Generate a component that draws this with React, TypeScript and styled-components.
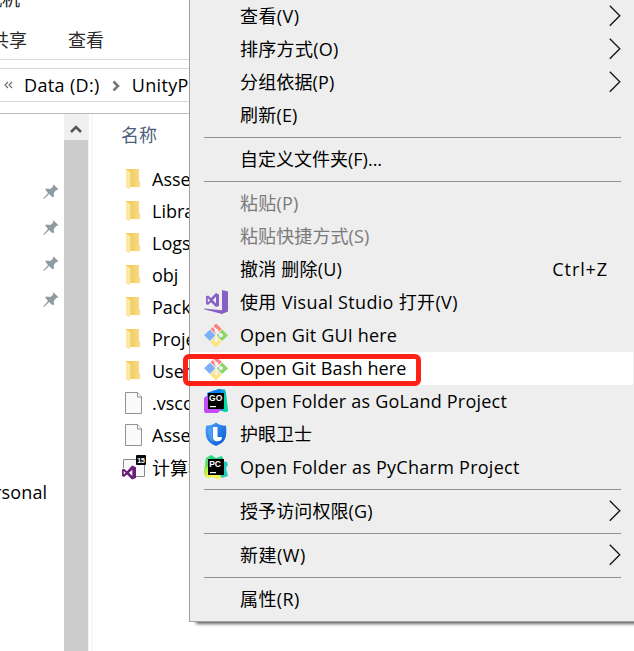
import React from "react";
import styled, { createGlobalStyle } from "styled-components";

const Global = createGlobalStyle`
  * { box-sizing: border-box; }
  body { margin: 0; overflow: hidden; background: #fff; }
`;

const Screen = styled.div`
  position: relative;
  width: 634px;
  height: 651px;
  overflow: hidden;
  background: #fff;
  color: #000;
  font-family: "Open Sans", "Noto Sans CJK SC", sans-serif;
  font-size: 18px;
`;
const Explorer = styled.div`
  display: flex;
  flex-direction: column;
  height: 100%;
  white-space: nowrap;
`;
const TitleBar = styled.div`
  display: flex;
  align-items: flex-end;
  height: 20px;
  padding-bottom: 9px;
  line-height: 24px;
  color: #222;
`;
const TitleText = styled.span`
  margin-left: -16px;
`;
const Tabs = styled.div`
  display: flex;
  align-items: center;
  gap: 41px;
  height: 40px;
  margin-left: -9px;
  padding-bottom: 2px;
  border-bottom: 1px solid #dadada;
  color: #2b2b2b;
`;
const AddressBar = styled.div`
  display: flex;
  align-items: center;
  height: 34px;
  margin-top: 8px;
  padding: 0 0 1px 4px;
  border: solid #d9d9d9;
  border-width: 1px 0;
`;
const Crumb = styled.span`
  letter-spacing: 0.35px;
`;
const Body = styled.div`
  display: flex;
  flex: 1;
  margin-top: 11px;
  border-top: 1px solid #b9b9b9;
`;
const NavPane = styled.div`
  display: flex;
  flex-direction: column;
  width: 64px;
  padding-top: 60px;
`;
const PinRow = styled.div`
  display: flex;
  justify-content: flex-end;
  align-items: center;
  height: 36px;
  padding-right: 5px;
`;
const NavLabel = styled.div`
  display: flex;
  align-items: center;
  height: 36px;
  margin: 156px 0 0 -6px;
  letter-spacing: 0.15px;
`;
const ScrollBar = styled.div`
  display: flex;
  flex-direction: column;
  width: 25px;
  border-right: 1px solid #f0f0f0;
`;
const ScrollUp = styled.div`
  display: flex;
  align-items: center;
  justify-content: center;
  height: 26px;
  padding-top: 3px;
  background: #f0f0f0;
`;
const Thumb = styled.div`
  flex: 1;
  background: #cdcdcd;
`;
const FilePane = styled.div`
  flex: 1;
  margin-left: 2px;
  border-left: 2px solid #f7f7f7;
`;
const ColumnHead = styled.div`
  display: flex;
  align-items: center;
  height: 49px;
  padding: 0 0 10px 28px;
  color: #4c607a;
`;
const FileRow = styled.div`
  display: flex;
  align-items: center;
  height: 32px;
  padding-left: 29px;
`;
const FileIcon = styled.div<{ $inset?: number }>`
  display: flex;
  width: 30px;
  padding-left: ${(p) => p.$inset ?? 0}px;
`;

const Menu = styled.div`
  position: absolute;
  left: 189px;
  top: 0;
  width: 460px;
  height: 622px;
  background: #eeeeee;
  border: solid #a0a0a0;
  border-width: 0 0 1px 1px;
  box-shadow: 6px 3px 3px -1px rgba(0, 0, 0, 0.6);
  white-space: pre;
`;
const MenuRow = styled.div<{ $active?: boolean; $disabled?: boolean }>`
  display: flex;
  align-items: center;
  width: 443px;
  height: 33px;
  padding-bottom: 1px;
  background: ${(p) => (p.$active ? "#fff" : "transparent")};
  color: ${(p) => (p.$disabled ? "#7a7a7a" : "#000")};
`;
const IconSlot = styled.div`
  display: flex;
  width: 50px;
  padding-left: 14px;
`;
const Label = styled.span<{ $track: number }>`
  flex: 1;
  line-height: 24px;
  padding-bottom: 1px;
  letter-spacing: ${(p) => p.$track}px;
`;
const Shortcut = styled.span`
  margin-right: 25px;
  line-height: 24px;
  padding-bottom: 1px;
  letter-spacing: 0.9px;
`;
const ArrowSlot = styled.div`
  display: flex;
  margin-right: 12px;
`;
const Separator = styled.div`
  width: 417px;
  height: 1px;
  margin: 5px 0 5px 14px;
  background: #919191;
`;
const Highlight = styled.div`
  position: absolute;
  left: 183px;
  top: 354px;
  width: 238px;
  height: 32px;
  border: 5px solid #ff2116;
  border-radius: 6px;
`;

const Pin = () => (
  <svg width="16" height="16" viewBox="0 0 16 16">
    <path d="M10.5 .3 15.6 5.4 13.3 6.1 10.8 8.7 11 12.4 9.6 13.2 6 9.9 1.1 15 .5 14.8 .7 14 5 9 2.2 5.6 3.2 4.6 7.4 5 9.8 2.8Z" fill="#8f9ba3" />
  </svg>
);
const Folder = () => (
  <svg width="16" height="22" viewBox="0 0 16 22">
    <defs>
      <linearGradient id="fold" x1="0" x2="1">
        <stop offset="0" stopColor="#eec457" />
        <stop offset="1" stopColor="#f8dc84" />
      </linearGradient>
    </defs>
    <path d="M0 1H13V13L14 14V19H0Z" fill="url(#fold)" />
    <path d="M0 1 4 4V21.5L0 19Z" fill="#ffe8a2" />
    <path d="M4 4 5 5V17L4 17.5Z" fill="#f7d77d" />
  </svg>
);
const Doc = () => (
  <svg width="18" height="22" viewBox="0 0 18 22">
    <path d="M.5 .5H12.5L16.5 5V21.5H.5Z" fill="#fafafa" stroke="#929292" />
    <path d="M12.5 .5V5H16.5" fill="#fff" stroke="#929292" />
  </svg>
);
const Solution = () => (
  <svg width="25" height="25" viewBox="0 0 25 25">
    <path d="M1.5 13V4.5H22.5V21.5H14" fill="#f8f8fa" stroke="#8a8a8a" />
    <path d="M10 10.5 14 12.3V23L10 24.5 5 19.5 2 22 0 21V14.5L2 13.7 5 16.2ZM10.3 14.7 7 17.8 10.3 21ZM1.8 16V19.6L3.7 17.8Z" fill="#68217a" fillRule="evenodd" />
    <rect x="14" y="0" width="10" height="10" rx="1" fill="#080808" />
    <text x="15.2" y="7.5" fill="#fff" fontFamily="Liberation Sans" fontSize="7" fontWeight="700">15</text>
  </svg>
);
const VisualStudio = () => (
  <svg width="24" height="24" viewBox="0 0 24 24">
    <path d="M18 0 24 1.5V21.5L18 24 0 19.2V18.6L18 20.3Z" fill="#8661c5" />
    <path d="M12 3 15 4.5V16L12 17 7 12.3 4 15 2 14V6.5L4 5.5 7 8ZM12 6.7 8.7 10.1 12 13.5ZM3.8 8V12.5L6 10.2Z" fill="#8661c5" fillRule="evenodd" />
  </svg>
);
const Git = () => (
  <svg width="24" height="25" viewBox="0 0 24 25">
    <path d="M12 .4 18 6.3 12 11.5 6.2 6.4Z" fill="#ff7d7d" />
    <path d="M18 6.3 24 12.4 18 18 12.4 12.4Z" fill="#8bd568" />
    <path d="M6 6.4 11.7 12.4 6 18 0 12.3Z" fill="#7eb0fa" />
    <path d="M12 12.6 17.8 18.3 12 24.5 6 18.4Z" fill="#ffe27a" />
    <path d="M6.2 6.2 17.9 18.4M17.9 6.2 6.2 18.4" stroke="#f2f2f2" strokeWidth="1" fill="none" />
    <path d="M8 2.5 12.4 7V18M12.4 7.5 17 12.2" stroke="#f2f2f2" strokeWidth="1.7" fill="none" />
    <circle cx="12.4" cy="7.7" r="2" fill="#f2f2f2" />
    <circle cx="17" cy="12.3" r="2" fill="#f2f2f2" />
    <circle cx="12.4" cy="17.5" r="2" fill="#f2f2f2" />
  </svg>
);
const GoLand = () => (
  <svg width="24" height="24" viewBox="0 0 24 24">
    <defs>
      <linearGradient id="go1" x1="0" x2="1">
        <stop offset=".4" stopColor="#087cfa" />
        <stop offset="1" stopColor="#04d995" />
      </linearGradient>
    </defs>
    <path d="M11 1.5 14 0 21 .5 22 4 24 22 22 23 10 20Z" fill="url(#go1)" />
    <path d="M0 9 5 5 11 10 17 20 14 24H1L0 22Z" fill="#c34bf8" />
    <path d="M3 4 11 1 16 8 5 15Z" fill="#087cfa" />
    <path d="M21 5 24 22 20 23 18 18Z" fill="#00dba0" />
    <rect x="4" y="4" width="16" height="16" fill="#000" />
    <text x="5.1" y="11.8" fill="#fff" fontFamily="Liberation Sans" fontSize="8.5" fontWeight="700">GO</text>
    <rect x="6" y="17" width="6" height="1.2" fill="#fff" />
  </svg>
);
const Shield = () => (
  <svg width="24" height="24" viewBox="0 0 24 24">
    <defs>
      <linearGradient id="sh" x1="0" y1="0" x2="1" y2="1">
        <stop offset="0" stopColor="#4aa3ff" />
        <stop offset="1" stopColor="#0755cf" />
      </linearGradient>
    </defs>
    <path d="M12 .4C9 2.7 6 3.5 2 3.8 1.4 10 1 17 6.5 21 8.3 22.4 10 23 12 24 14 23 16 22.2 17.7 21 23 17 22.6 10 22 3.8 18 3.5 15 2.7 12 .4Z" fill="url(#sh)" />
    <path d="M4 6 8.5 5 8.5 16C9 18 9 19 9 20 5 17 4 14 4 6Z" fill="#72b8ff" opacity=".45" />
    <path d="M9 5H13.5V15H18C18 18 16.3 19.3 13.5 19.3 10 19.3 8.6 17 9 14Z" fill="#fff" />
  </svg>
);
const PyCharm = () => (
  <svg width="24" height="24" viewBox="0 0 24 24">
    <path d="M2 3 7 0 12 3 18 1 20 6 12 14 5 18 0 18Z" fill="#21d789" />
    <path d="M1 9 5 6 9 19 17 22 15 24 8 22 3 23 0 19Z" fill="#b8ef42" />
    <path d="M3 17 20 17 19 22 14 24 8 22 2 23Z" fill="#f4f05a" />
    <path d="M18 6 23 7 24 10 22 13 24 21 18 23 15 18Z" fill="#20ccc2" />
    <path d="M2 4 7 1 5 10 1 14Z" fill="#62dc63" />
    <rect x="4" y="4" width="16" height="16" fill="#000" />
    <text x="5.2" y="11.8" fill="#fff" fontFamily="Liberation Sans" fontSize="8.5" fontWeight="700">PC</text>
    <rect x="6" y="17" width="6" height="1.2" fill="#fff" />
  </svg>
);
const Arrow = () => (
  <svg width="12" height="22" viewBox="0 0 12 22">
    <path d="M.8 .8 10.8 10.8 .8 20.8" fill="none" stroke="#111" strokeWidth="1.3" />
  </svg>
);

type Item = {
  label: string;
  track?: number;
  icon?: React.ReactNode;
  arrow?: boolean;
  shortcut?: string;
  active?: boolean;
  disabled?: boolean;
};

const groups: Item[][] = [
  [
    { label: "查看(V)", track: 0.4, arrow: true },
    { label: "排序方式(O)", track: 0.3, arrow: true },
    { label: "分组依据(P)", track: 0.15, arrow: true },
    { label: "刷新(E)", track: 0.2 },
  ],
  [{ label: "自定义文件夹(F)..." }],
  [
    { label: "粘贴(P)", track: 0.2, disabled: true },
    { label: "粘贴快捷方式(S)", track: 0.1, disabled: true },
    { label: "撤消 删除(U)", track: 0.2, shortcut: "Ctrl+Z" },
    { label: "使用 Visual Studio 打开(V)", track: 0.33, icon: <VisualStudio /> },
    { label: "Open Git GUI here", track: 0.18, icon: <Git /> },
    { label: "Open Git Bash here", track: 0.14, icon: <Git />, active: true },
    { label: "Open Folder as GoLand Project", track: 0.22, icon: <GoLand /> },
    { label: "护眼卫士", icon: <Shield /> },
    { label: "Open Folder as PyCharm Project", track: 0.27, icon: <PyCharm /> },
  ],
  [{ label: "授予访问权限(G)", track: 0.1, arrow: true }],
  [{ label: "新建(W)", track: 0.5, arrow: true }],
  [{ label: "属性(R)", track: 0.4 }],
];

type FileEntry = { name: string; icon: React.ReactNode; inset: number };

const files: FileEntry[] = [
  { name: "Assets", icon: <Folder />, inset: 4 },
  { name: "Library", icon: <Folder />, inset: 4 },
  { name: "Logs", icon: <Folder />, inset: 4 },
  { name: "obj", icon: <Folder />, inset: 4 },
  { name: "Packages", icon: <Folder />, inset: 4 },
  { name: "ProjectSettings", icon: <Folder />, inset: 4 },
  { name: "UserSettings", icon: <Folder />, inset: 4 },
  { name: ".vsconfig", icon: <Doc />, inset: 3 },
  { name: "Assembly", icon: <Doc />, inset: 3 },
  { name: "计算机", icon: <Solution />, inset: 0 },
];

export default function App() {
  return (
    <Screen>
      <Global />
      <Explorer>
        <TitleBar>
          <TitleText>机机</TitleText>
        </TitleBar>
        <Tabs>
          <span>共享</span>
          <span>查看</span>
        </Tabs>
        <AddressBar>
          <svg width="20" height="10" viewBox="0 0 20 10">
            <path d="M4 2 1 5 4 8M8 2 5 5 8 8" fill="none" stroke="#666" strokeWidth="1.1" />
          </svg>
          <Crumb>Data (D:)</Crumb>
          <svg width="32" height="12" viewBox="0 0 32 12">
            <path d="M13.5 2.5 18 7 13.5 11.5" fill="none" stroke="#777" strokeWidth="2.6" />
          </svg>
          <Crumb>UnityProject</Crumb>
        </AddressBar>
        <Body>
          <NavPane>
            {[0, 1, 2, 3].map((i) => (
              <PinRow key={i}>
                <Pin />
              </PinRow>
            ))}
            <NavLabel>rsonal</NavLabel>
          </NavPane>
          <ScrollBar>
            <ScrollUp>
              <svg width="12" height="10" viewBox="0 0 12 10">
                <path d="M1 8 6 3 11 8" fill="none" stroke="#555" strokeWidth="2.5" />
              </svg>
            </ScrollUp>
            <Thumb />
          </ScrollBar>
          <FilePane>
            <ColumnHead>名称</ColumnHead>
            {files.map((file) => (
              <FileRow key={file.name}>
                <FileIcon $inset={file.inset}>{file.icon}</FileIcon>
                {file.name}
              </FileRow>
            ))}
          </FilePane>
        </Body>
      </Explorer>
      <Menu>
        {groups.map((group, g) => (
          <React.Fragment key={g}>
            {g > 0 && <Separator />}
            {group.map((item) => (
              <MenuRow key={item.label} $active={item.active} $disabled={item.disabled}>
                <IconSlot>{item.icon}</IconSlot>
                <Label $track={item.track ?? 0}>{item.label}</Label>
                {item.shortcut && <Shortcut>{item.shortcut}</Shortcut>}
                {item.arrow && (
                  <ArrowSlot>
                    <Arrow />
                  </ArrowSlot>
                )}
              </MenuRow>
            ))}
          </React.Fragment>
        ))}
      </Menu>
      <Highlight />
    </Screen>
  );
}
